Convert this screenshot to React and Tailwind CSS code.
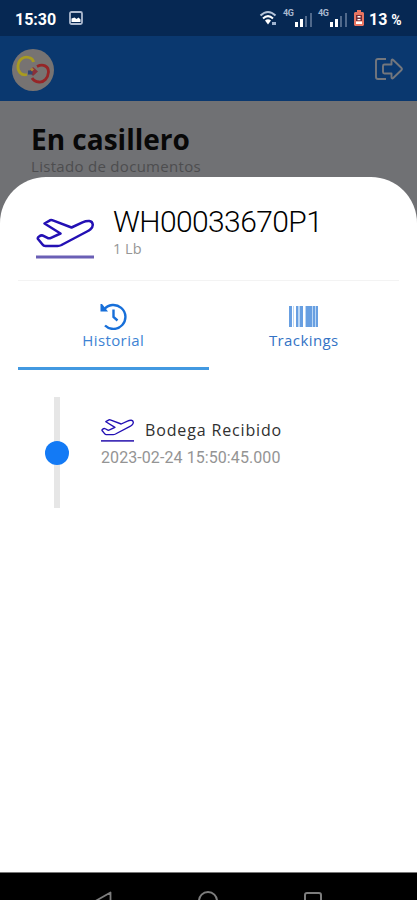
function Plane({ className, strokeWidth, lineClass }) {
  return (
    <svg viewBox="0 0 58 42" className={className} fill="none" strokeLinejoin="round" preserveAspectRatio="none">
      <path
        d="M8.500 6.500L14 3.300Q15.500 2.800 17.500 3.600L35.500 10.500L46.500 5.300Q50 3.800 53.300 4C57.500 4.500 57.800 9.500 54.500 12.200Q53 13.500 51 14.500L25.500 28Q23.500 29 21.500 29H9.500Q7.500 29 6.300 27.300L1.800 21.800Q1.500 20.500 3 19.500Q5.500 17.700 7.500 18.800L12 21.200Q13.500 21.600 15 20.800L24.500 16.500Z"
        stroke="#2310b4"
        strokeWidth={strokeWidth}
      />
      <path d="M0 40H58" className={lineClass} strokeWidth="3.200" />
    </svg>
  );
}

function Signal() {
  return (
    <div className="flex h-[18px] w-[30px] items-end">
      <span className="h-[18px] w-[12px] text-[9px] leading-[9px] font-bold tracking-[-0.3px] text-[#a9b9d0]">4G</span>
      <svg viewBox="0 0 18 16" className="h-[16px] w-[18px]">
        <path d="M0 11h3v5H0z M5 8h3v8H5z" fill="#fff" />
        <path d="M10 5h2v11h-2z M15 2h2v14h-2z" fill="#50698b" />
      </svg>
    </div>
  );
}

function StatusBar() {
  return (
    <div className="flex h-9 shrink-0 items-center bg-[#062853] pl-[15px] text-white">
      <span className="w-[41px] pt-[3px] text-[16px] leading-none font-bold">15:30</span>
      <svg viewBox="0 0 14 14" className="ml-[13px] h-[14px] w-[14px]">
        <rect x="1" y="1" width="12" height="12" rx="1.5" fill="none" stroke="#aebbd0" strokeWidth="1.8" />
        <path d="M2.500 11V7.500l3-1 2 1.500 2-1.500 2 2V11z" fill="#fff" />
      </svg>
      <svg viewBox="0 0 20 16" className="ml-[176px] h-[16px] w-[20px]" fill="none" stroke="#fff" strokeWidth="2">
        <path d="M1.500 5.500Q9 -1.500 16.500 5.500" stroke="#b5c4d9" />
        <path d="M4 8.500Q9 3.800 14 8.500" />
        <path d="M6 10.500Q9 8 12 10.500L9 14.500z" fill="#fff" stroke="none" />
        <path d="M13 12h4v3h-4z" fill="#9fb3cf" stroke="none" />
      </svg>
      <div className="ml-[4px] flex gap-[5px]">
        <Signal />
        <Signal />
      </div>
      <svg viewBox="0 0 10 16" className="ml-[6px] h-[16px] w-[10px]">
        <path d="M3 0h4v2h2l1 1v12l-1 1H1l-1-1V3l1-1h2z" fill="#e87561" />
        <path d="M2 5h6v6H2z" fill="#772e38" />
        <path d="M3.500 6h3v1.500h-3z M3.500 9h3v1.200h-3z M2 11.500h6v2.500H2z" fill="#fff" />
      </svg>
      <span className="ml-[5px] pt-[3px] text-[16px] leading-none font-bold whitespace-nowrap">
        13 <span className="text-[14px]">%</span>
      </span>
    </div>
  );
}

function AppHeader() {
  return (
    <header className="flex h-[65px] shrink-0 items-center justify-between bg-[#0a386f] pr-[13px] pl-[12px]">
      <svg viewBox="0 0 42 42" className="mt-[2px] h-[42px] w-[42px]">
        <circle cx="21" cy="21" r="21" fill="#777372" />
        <path d="M15 25.500C9 27 5.500 22 6 17C6.500 10 12 7 17 8.500Q21 9.500 21.500 13" fill="none" stroke="#a89b20" strokeWidth="2.800" />
        <path d="M25 17.500C31 14.500 36.500 17 36.500 23C36 29 32 33.500 27 33Q22 32.500 20 29" fill="none" stroke="#962527" strokeWidth="2.800" />
        <path d="M21 18l5 4.500-5 4.500-4-4.500z" fill="#8a3039" />
        <path d="M16 21.500h4.500v4H16z" fill="#314671" />
        <path d="M20 18.500l2 2-2 2-2-2z" fill="#a58435" />
      </svg>
      <svg viewBox="0 0 30 24" className="mt-[1px] h-[24px] w-[30px]" fill="none" stroke="#74777d" strokeWidth="1.900" strokeLinejoin="round">
        <path d="M12 2H4Q2 2 2 4V20Q2 22 4 22H12" />
        <path d="M10.500 7.500H17.500V4Q17.500 1.500 19.500 3.200L27.500 11Q28.500 12 27.500 13L19.500 20.800Q17.500 22.500 17.500 20V16.500H10.500Q9 16.500 9 15V9Q9 7.500 10.500 7.500Z" />
      </svg>
    </header>
  );
}

function Tab({ label, active, children }) {
  return (
    <button className={`flex h-[89px] w-[191px] flex-col items-center border-b-[3px] pt-[20px] ${active ? "border-[#4299e1]" : "border-transparent"}`}>
      <span className="flex h-[29px] items-center">{children}</span>
      {label}
    </button>
  );
}

function DetailSheet() {
  return (
    <section className="absolute inset-x-0 top-[177px] bottom-[28px] rounded-t-[46px] bg-white px-[18px] font-['Open_Sans',sans-serif]">
      <div className="flex h-[104px] border-b border-[#f3f3f3] pl-[18px]">
        <Plane className="mt-[40px] h-[42px] w-[58px] shrink-0" strokeWidth="2.500" lineClass="stroke-[#6a5fb5]" />
        <div className="ml-[19px] pt-[27px]">
          <h2 className="font-['Roboto',sans-serif] text-[30px] leading-[35px] font-light tracking-[-0.6px] text-black">WH00033670P1</h2>
          <p className="text-[14.5px] leading-[20px] text-[#969696]">1 Lb</p>
        </div>
      </div>
      <div className="flex">
        <Tab
          active
          label={<span className="text-[15px] leading-[20px] tracking-[0.4px] text-[#3d83d4]">Historial</span>}
        >
          <svg viewBox="0 0 28 28" className="h-[28px] w-[28px]" fill="none" stroke="#176fd9" strokeWidth="2.400">
            <path d="M5 7.500A12 12 0 1 1 6 23.500" />
            <path d="M1.500 2L3 2L9 9.500H1.500Z" fill="#176fd9" stroke="none" />
            <path d="M14.500 7.500V15L18.500 18.500" />
          </svg>
        </Tab>
        <Tab
          label={<span className="text-[15px] leading-[20px] tracking-[0.4px] text-[#3473c5]">Trackings</span>}
        >
          <svg viewBox="0 0 29 21" className="mt-[2px] h-[21px] w-[29px]">
            <path d="M0 0h3v21H0z M7 0h2v21H7z M11 0h3v21h-3z M17 0h6v21h-6z M24 0h2v21h-2z M27 0h2v21h-2z" fill="#689fe1" />
            <path d="M4 0h1v21H4z M9 0h2v21H9z M16 0h1v21h-1z M23 0h1v21h-1z M26 0h1v21h-1z" fill="#b9d6f5" />
          </svg>
        </Tab>
      </div>
      <div className="mt-[27px] flex h-[111px]">
        <div className="ml-[27px] flex w-[24px] items-center bg-[linear-gradient(#e6e6e6,#e6e6e6)] bg-[length:6px_100%] bg-center bg-no-repeat">
          <span className="h-[24px] w-[24px] rounded-full bg-[#137af5]" />
        </div>
        <div className="ml-[32px] pt-[21px]">
          <div className="flex h-[28px]">
            <Plane className="h-[24px] w-[33px]" strokeWidth="2.400" lineClass="stroke-[#4432b8]" />
            <span className="ml-[11px] text-[16px] leading-[24px] tracking-[0.85px] text-[#303030]">Bodega Recibido</span>
          </div>
          <p className="font-['Roboto',sans-serif] text-[16px] leading-[23px] tracking-[0.08px] text-[#949494]">2023-02-24 15:50:45.000</p>
        </div>
      </div>
    </section>
  );
}

function NavBar() {
  return (
    <nav className="flex h-[28px] shrink-0 justify-between overflow-hidden border-t border-[#777] bg-black pt-[18px] pr-[95px] pl-[94px]">
      <svg viewBox="0 0 18 20" className="h-[20px] w-[18px]" fill="none" stroke="#7d7d7d" strokeWidth="1.800" strokeLinejoin="round">
        <path d="M16.500 1.500V18.500L1.500 10Z" />
      </svg>
      <svg viewBox="0 0 20 20" className="h-[20px] w-[20px]" fill="none" stroke="#7d7d7d" strokeWidth="2">
        <circle cx="10" cy="10" r="9" />
      </svg>
      <svg viewBox="0 0 18 18" className="mt-[1px] h-[18px] w-[18px]" fill="none" stroke="#7d7d7d" strokeWidth="2">
        <rect x="1" y="1" width="16" height="16" rx="2" />
      </svg>
    </nav>
  );
}

export default function App() {
  return (
    <div className="relative flex h-[900px] w-[417px] flex-col overflow-hidden bg-[#707174] font-['Roboto',sans-serif]">
      <StatusBar />
      <AppHeader />
      <main className="flex-1 pt-[21px] pl-[31px] font-['Open_Sans',sans-serif]">
        <h1 className="text-[28px] leading-[34px] font-bold text-[#080808]">En casillero</h1>
        <p className="text-[15px] leading-[20px] tracking-[0.3px] text-[#4d4d4f]">Listado de documentos</p>
      </main>
      <DetailSheet />
      <NavBar />
    </div>
  );
}
